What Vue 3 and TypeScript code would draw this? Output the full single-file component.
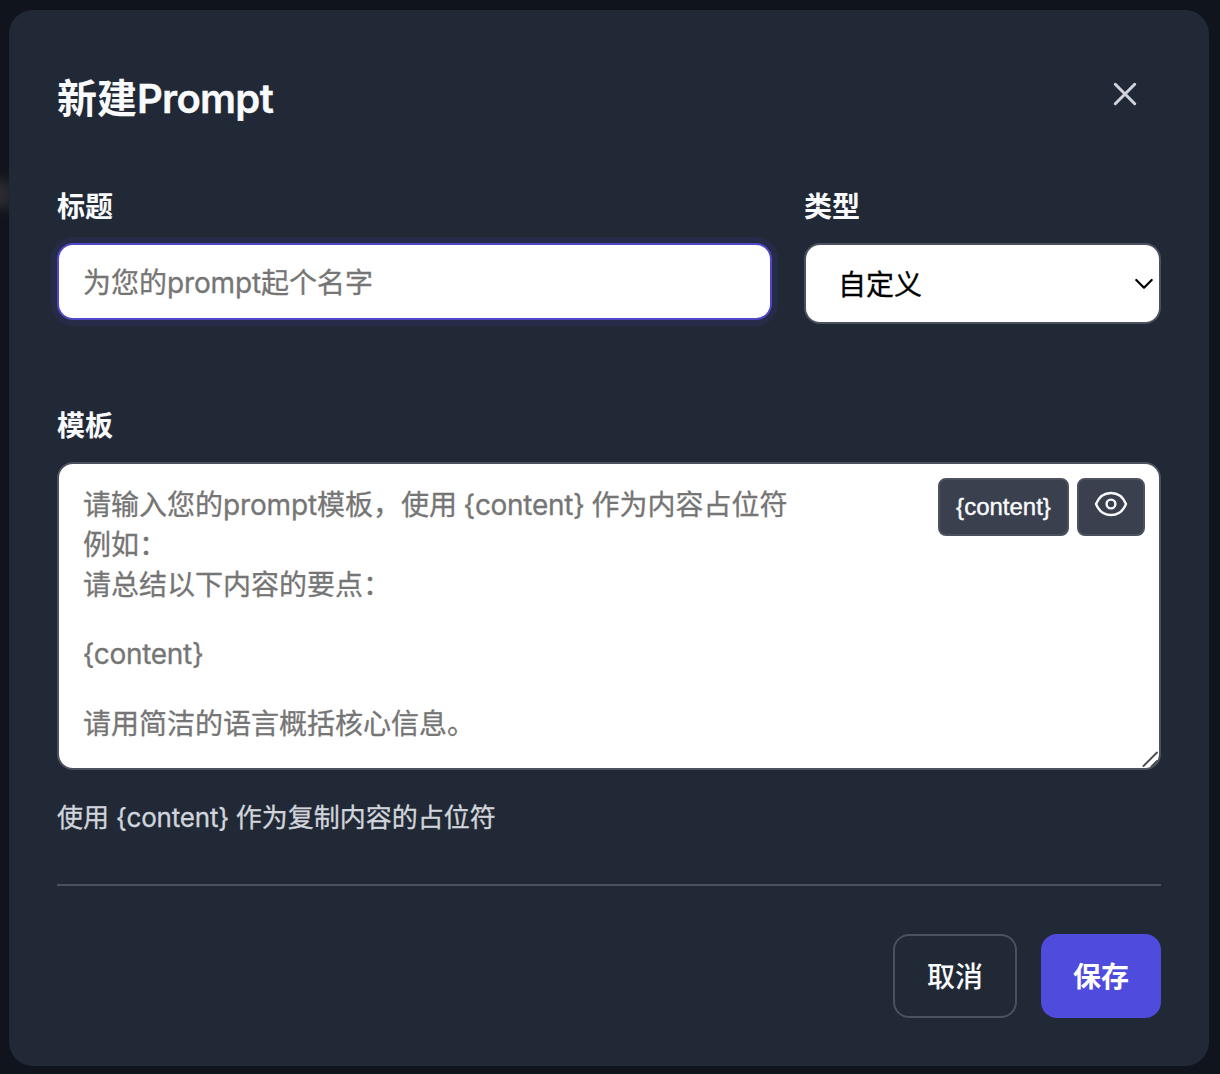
<script setup lang="ts">
import { ref } from 'vue'

interface Part {
  text: string
  latin?: boolean
}

const templateHint: Part[][] = [
  [
    { text: '请输入您的' },
    { text: 'prompt', latin: true },
    { text: '模板，使用 ' },
    { text: '{content}', latin: true },
    { text: ' 作为内容占位符' },
  ],
  [{ text: '例如：' }],
  [{ text: '请总结以下内容的要点：' }],
  [],
  [{ text: '{content}', latin: true }],
  [],
  [{ text: '请用简洁的语言概括核心信息。' }],
]

const isShort = (line: Part[]) => line.every((p) => p.latin)
const type = ref('自定义')
const token = '{content}'
</script>

<template>
  <div class="backdrop">
    <div class="glow"></div>
    <section class="modal" role="dialog">
      <header class="head">
        <h2>新建<span class="t-lat">Prompt</span></h2>
        <button class="close" aria-label="关闭">
          <svg width="24" height="24" viewBox="0 0 24 24" fill="none" stroke="currentColor" stroke-width="3" stroke-linecap="round">
            <path d="M2.300 2.300 21.700 21.700M21.700 2.300 2.300 21.700" />
          </svg>
        </button>
      </header>

      <div class="row">
        <div class="field grow">
          <label>标题</label>
          <div class="input focused"><span>为您的<span class="p-lat">prompt</span>起个名字</span></div>
        </div>
        <div class="field kind">
          <label>类型</label>
          <div class="input select">
            <span>{{ type }}</span>
            <svg width="18" height="12" viewBox="0 0 18 12" fill="none" stroke="#000" stroke-width="2.200" stroke-linecap="round" stroke-linejoin="round">
              <path d="M1.300 2 9 9.700 16.700 2" />
            </svg>
          </div>
        </div>
      </div>

      <div class="field">
        <label>模板</label>
        <div class="area">
          <div v-for="(line, i) in templateHint" :key="i" class="line" :class="{ short: isShort(line) }">
            <span v-for="(p, j) in line" :key="j" :class="{ 'p-lat': p.latin, token: p.text === token }">{{ p.text }}</span>
          </div>
          <div class="tools">
            <button class="tool insert"><span>{{ token }}</span></button>
            <button class="tool eye" aria-label="预览">
              <svg width="34" height="26" viewBox="0 0 34 26" fill="none" stroke="currentColor" stroke-width="2.400">
                <path d="M2 13C5 5.600 10.600 2 17 2s12 3.600 15 11c-3 7.400-8.600 11-15 11S5 20.400 2 13Z" stroke-linejoin="round" />
                <circle cx="17" cy="13" r="4.400" />
              </svg>
            </button>
          </div>
          <svg class="grip" width="18" height="18" viewBox="0 0 18 18" fill="none" stroke="#4a4b50" stroke-width="1.900" stroke-linecap="round">
            <path d="M2.500 16 16 2.500M10.500 16.500 16 11" />
          </svg>
        </div>
        <p class="help">使用 <span class="h-lat">{{ token }}</span> 作为复制内容的占位符</p>
      </div>

      <footer class="foot">
        <button class="btn cancel">取消</button>
        <button class="btn save">保存</button>
      </footer>
    </section>
  </div>
</template>

<style>
body {
  margin: 0;
  background: #10141c;
}
</style>

<style scoped>
* {
  box-sizing: border-box;
}
.backdrop {
  position: relative;
  width: 1220px;
  height: 1074px;
  padding: 10px 11px 8px 9px;
  overflow: hidden;
  background: #10141c;
  font-family: Inter, 'Noto Sans CJK SC', sans-serif;
}
.glow {
  position: absolute;
  left: -12px;
  top: 180px;
  width: 24px;
  height: 28px;
  background: #2b2c31;
  filter: blur(6px);
}
.modal {
  position: relative;
  display: flex;
  flex-direction: column;
  height: 1056px;
  padding: 48px;
  border-radius: 24px;
  background: #222936;
  color: #f9fafb;
}
button {
  margin: 0;
  padding: 0;
  font-family: inherit;
  color: inherit;
  background: none;
  border: 0;
}
.head {
  display: flex;
  justify-content: space-between;
  align-items: flex-start;
  height: 126px;
}
h2 {
  margin: 11px 0 0;
  font-size: 40px;
  line-height: 60px;
  font-weight: 700;
  white-space: nowrap;
}
.t-lat {
  font-weight: 600;
  letter-spacing: -0.7px;
  -webkit-text-stroke: 0.4px currentColor;
}
.close {
  display: flex;
  margin: 24px 24px 0 0;
  color: #d1d5db;
}
.row {
  display: flex;
  gap: 32px;
  height: 219px;
}
.field {
  display: flex;
  flex-direction: column;
}
.grow {
  flex: 1;
}
.kind {
  width: 357px;
}
label {
  height: 59px;
  line-height: 46px;
  font-size: 28px;
  font-weight: 700;
}
.input {
  display: flex;
  align-items: center;
  height: 77px;
  padding: 0 24px 2px;
  border: 2px solid #4b515e;
  border-radius: 16px;
  background: #fff;
  color: #757575;
  font-size: 28px;
  white-space: nowrap;
}
.input > span,
.line,
.help {
  -webkit-text-stroke: 0.3px currentColor;
}
.focused {
  border-color: #4f46c8;
  box-shadow: 0 0 0 6px rgba(79, 70, 229, 0.1);
}
.p-lat {
  letter-spacing: -0.15px;
}
.token {
  margin-left: -0.5px;
  letter-spacing: -0.3px;
}
.select {
  justify-content: space-between;
  height: 81px;
  padding: 0 6px 2px 32px;
  color: #000;
}
.select svg {
  margin-top: 2px;
}
.area {
  position: relative;
  height: 308px;
  padding: 21px 24px 19px;
  border: 2px solid #4b515e;
  border-radius: 16px;
  background: #fff;
  color: #757575;
  font-size: 28px;
}
.line {
  height: 40px;
  line-height: 40px;
  white-space: pre;
  word-spacing: -1.1px;
}
.line.short {
  height: 33px;
  line-height: 33px;
}
.tools {
  position: absolute;
  top: 14px;
  right: 14px;
  display: flex;
  gap: 8px;
}
.tool {
  display: flex;
  align-items: center;
  justify-content: center;
  height: 58px;
  border: 2px solid #4b515e;
  border-radius: 8px;
  background: #3a404e;
  color: #f9fafb;
}
.insert {
  width: 131px;
  font-family: 'Liberation Sans', sans-serif;
  font-size: 24px;
  -webkit-text-stroke: 0.4px currentColor;
}
.eye {
  width: 68px;
  padding-bottom: 6px;
}
.grip {
  position: absolute;
  right: 0;
  bottom: 0;
}
.help {
  margin: 28px 0 0;
  font-size: 26px;
  line-height: 40px;
  color: #d1d5db;
  word-spacing: -0.7px;
}
.h-lat {
  letter-spacing: -0.2px;
}
.foot {
  display: flex;
  justify-content: flex-end;
  gap: 24px;
  margin-top: 46px;
  padding-top: 48px;
  border-top: 2px solid #4b515e;
}
.btn {
  height: 84px;
  padding-bottom: 2px;
  border-radius: 16px;
  font-size: 28px;
}
.cancel {
  width: 124px;
  border: 2px solid #4b515e;
  font-weight: 500;
}
.save {
  width: 120px;
  background: #4f4bdc;
  color: #fff;
  font-weight: 700;
}
</style>
